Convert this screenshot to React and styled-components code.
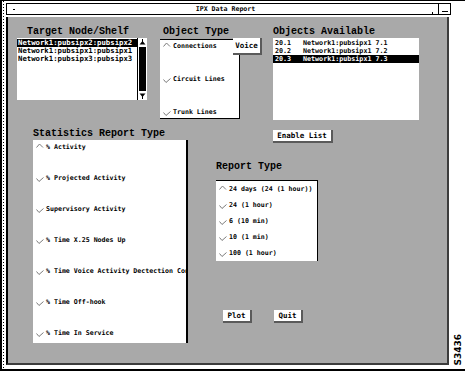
import React from "react";
import styled, { createGlobalStyle } from "styled-components";

const Global = createGlobalStyle`
  html, body { margin: 0; padding: 0; background: #fff; }
  body { font-family: "DejaVu Sans Mono", monospace; color: #000; }
  * { box-sizing: border-box; }
`;

const Frame = styled.div`
  width: 465px;
  height: 371px;
  background: #fff;
  border-top: 1px solid #000;
  border-left: 2px solid #000;
  border-bottom: 2px solid #000;
  display: flex;
`;

const Rail = styled.div`
  width: 4px;
  background: repeating-linear-gradient(to bottom, #000 0 1px, transparent 1px 3px) 1px 0 / 1px 100% no-repeat;
`;

const Center = styled.div`
  width: 443px;
  display: flex;
  flex-direction: column;
  padding-bottom: 4px;
`;

const TitleBar = styled.div`
  margin-top: 2px;
  margin-right: -2px;
  height: 12px;
  border: 1px solid #000;
  background: #fff;
  display: flex;
  align-items: stretch;
`;

const MenuDot = styled.div`
  width: 2px;
  height: 1px;
  background: #000;
  align-self: center;
  margin-left: 6px;
`;

const Title = styled.div`
  flex: 1;
  text-align: center;
  font: bold 6.6px/10px "DejaVu Sans Mono", monospace;
  padding-left: 4px;
`;

const CornerDot = styled.div`
  width: 1px;
  height: 2px;
  background: #000;
  align-self: flex-end;
  margin-right: 5px;
  margin-bottom: 0;
`;

const MinBox = styled.div`
  width: 12px;
  border-left: 1px solid #000;
  display: flex;
  align-items: flex-end;
  justify-content: center;
  padding-bottom: 2px;
`;

const MinBar = styled.div`
  width: 6px;
  height: 1px;
  background: #000;
`;

const Panel = styled.div`
  margin-top: 2px;
  flex: 1;
  background: #a9a9a9;
  border-left: 2px solid #000;
  border-right: 2px solid #3c3c3c;
  border-bottom: 2px solid #3c3c3c;
  padding: 8px 0 0 9px;
  display: flex;
  flex-direction: column;
`;

const Row = styled.div`
  display: flex;
  align-items: flex-start;
  margin-top: ${(p) => p.$top || 0}px;
`;

const Group = styled.div`
  display: flex;
  flex-direction: column;
  align-items: flex-start;
  margin-left: ${(p) => p.$left || 0}px;
`;

const Label = styled.div`
  font: bold 10px/13px "Liberation Mono", "Courier New", monospace;
  height: 13px;
  white-space: nowrap;
  padding-left: ${(p) => p.$indent || 0}px;
  margin-top: ${(p) => p.$top || 0}px;
  margin-bottom: ${(p) => p.$bottom || 0}px;
`;

const ListFrame = styled.div`
  display: flex;
  width: ${(p) => p.$w}px;
  height: ${(p) => p.$h}px;
  background: #fff;
`;

const List = styled.div`
  flex: 1;
  padding-top: 1px;
  overflow: hidden;
`;

const ListRow = styled.div`
  height: 8px;
  display: flex;
  align-items: center;
  white-space: nowrap;
  font: bold ${(p) => p.$size || 7.3}px/8px "DejaVu Sans Mono", monospace;
  padding-left: ${(p) => p.$pad || 1}px;
  background: ${(p) => (p.$selected ? "#000" : "transparent")};
  color: ${(p) => (p.$selected ? "#fff" : "#000")};
`;

const Cell = styled.span`
  display: inline-block;
  width: ${(p) => (p.$w ? `${p.$w}px` : "auto")};
`;

const Scrollbar = styled.div`
  width: 10px;
  border-left: 1px solid #000;
  display: flex;
  flex-direction: column;
  align-items: center;
  padding: 1px 0;
  background: #fff;
`;

const Thumb = styled.div`
  flex: 1;
  width: 7px;
  background: #000;
  margin: 2px 0;
`;

const Arrow = ({ down }) => (
  <svg width="7" height="6" viewBox="0 0 7 6">
    {down ? (
      <>
        <polygon points="0.5,0.5 6.5,0.5 3.5,4" fill="#000" />
        <rect x="3" y="3" width="1" height="3" fill="#000" />
      </>
    ) : (
      <>
        <polygon points="0.5,5.5 6.5,5.5 3.5,2" fill="#000" />
        <rect x="3" y="0" width="1" height="3" fill="#000" />
      </>
    )}
  </svg>
);

const RadioBox = styled.div`
  width: ${(p) => p.$w}px;
  height: ${(p) => p.$h}px;
  background: #fff;
  border-top: ${(p) => (p.$top ? "1px solid #000" : "none")};
  border-right: ${(p) => p.$right || 1}px solid #000;
  border-bottom: ${(p) => (p.$bottom ? "1px solid #000" : "none")};
  display: flex;
  flex-direction: column;
  justify-content: ${(p) => (p.$spread ? "space-between" : "flex-start")};
  gap: ${(p) => p.$gap || 0}px;
  padding: ${(p) => p.$padTop || 2}px 0 ${(p) => p.$padBottom || 2}px 3px;
  overflow: hidden;
`;

const RadioItem = styled.div`
  height: 8px;
  display: flex;
  align-items: center;
  gap: 2px;
  white-space: nowrap;
  font: bold 6.6px/8px "DejaVu Sans Mono", monospace;
  flex-shrink: 0;
`;

const Mark = styled.svg`
  flex-shrink: 0;
  margin-top: ${(p) => (p.$on ? -3 : 2)}px;
`;

const Indicator = ({ on }) => (
  <Mark $on={on} width="8" height="5" viewBox="0 0 8 5">
    <polyline
      points={on ? "0.5,4.5 3.5,1 7,4.5" : "0.5,1.5 3,4.5 7.5,0.5"}
      stroke="#7c7c7c"
      strokeWidth="1"
      fill="none"
    />
  </Mark>
);

const Radio = ({ on, children }) => (
  <RadioItem>
    <Indicator on={on} />
    <span>{children}</span>
  </RadioItem>
);

const Button = styled.div`
  width: ${(p) => p.$w}px;
  height: ${(p) => p.$h || 13}px;
  margin-left: ${(p) => p.$left || 0}px;
  margin-top: ${(p) => p.$top || 0}px;
  background: #fff;
  border-right: 2px solid #5a5a5a;
  border-bottom: 2px solid #5a5a5a;
  display: flex;
  align-items: center;
  justify-content: center;
  font: bold 7.5px/1 "DejaVu Sans Mono", monospace;
  white-space: nowrap;
  position: relative;
  flex-shrink: 0;
`;

const RightMargin = styled.div`
  flex: 1;
  display: flex;
  flex-direction: column;
  justify-content: flex-end;
  align-items: center;
  padding: 0 0 3px 3px;
`;

const Tag = styled.div`
  writing-mode: vertical-rl;
  transform: rotate(180deg);
  font: bold 9px/9px "DejaVu Sans", sans-serif;
`;

const targets = [
  "Network1:pubsipx2:pubsipx2",
  "Network1:pubsipx1:pubsipx1",
  "Network1:pubsipx3:pubsipx3",
];

const objects = [
  ["20.1", "Network1:pubsipx1 7.1"],
  ["20.2", "Network1:pubsipx1 7.2"],
  ["20.3", "Network1:pubsipx1 7.3"],
];

const stats = [
  "% Activity",
  "% Projected Activity",
  "Supervisory Activity",
  "% Time X.25 Nodes Up",
  "% Time Voice Activity Dectection Con",
  "% Time Off-hook",
  "% Time In Service",
];

const reports = [
  "24 days (24 (1 hour))",
  "24 (1 hour)",
  "6 (10 min)",
  "10 (1 min)",
  "100 (1 hour)",
];

export default function App() {
  return (
    <>
      <Global />
      <Frame>
        <Rail />
        <Center>
          <TitleBar>
            <MenuDot />
            <Title>IPX Data Report</Title>
            <CornerDot />
            <MinBox>
              <MinBar />
            </MinBox>
          </TitleBar>
          <Panel>
            <Row>
              <Group>
                <Label $indent={10}>Target Node/Shelf</Label>
                <ListFrame $w={130} $h={62}>
                  <List>
                    {targets.map((t, i) => (
                      <ListRow key={t} $selected={i === 0}>
                        {t}
                      </ListRow>
                    ))}
                  </List>
                  <Scrollbar>
                    <Arrow />
                    <Thumb />
                    <Arrow down />
                  </Scrollbar>
                </ListFrame>
              </Group>
              <Group $left={13}>
                <Label $indent={3} $bottom={1}>Object Type</Label>
                <Row>
                  <RadioBox $w={80} $h={80} $top $bottom $spread>
                    <Radio on>Connections</Radio>
                    <Radio>Circuit Lines</Radio>
                    <Radio>Trunk Lines</Radio>
                  </RadioBox>
                  <Button $w={29} $h={17} $left={-7} $top={-1}>
                    Voice
                  </Button>
                </Row>
              </Group>
              <Group $left={11}>
                <Label>Objects Available</Label>
                <ListFrame $w={146} $h={82}>
                  <List>
                    {objects.map(([a, b], i) => (
                      <ListRow key={a} $selected={i === 2} $size={6.7} $pad={2}>
                        <Cell $w={28}>{a}</Cell>
                        <Cell>{b}</Cell>
                      </ListRow>
                    ))}
                  </List>
                </ListFrame>
              </Group>
            </Row>
            <Row $top={7}>
              <Group $left={16}>
                <Label>Statistics Report Type</Label>
                <RadioBox $w={155} $h={203} $right={2} $gap={23} $padTop={3}>
                  {stats.map((s, i) => (
                    <Radio key={s} on={i === 0}>
                      {s}
                    </Radio>
                  ))}
                </RadioBox>
              </Group>
              <Group $left={28}>
                <Button $w={60} $left={57} $top={3}>
                  Enable List
                </Button>
                <Label $top={17} $bottom={7}>Report Type</Label>
                <RadioBox $w={102} $h={81} $top $gap={8} $padTop={4}>
                  {reports.map((r, i) => (
                    <Radio key={r} on={i === 0}>
                      {r}
                    </Radio>
                  ))}
                </RadioBox>
                <Row $top={49}>
                  <Button $w={29} $left={7}>Plot</Button>
                  <Button $w={29} $left={22}>Quit</Button>
                </Row>
              </Group>
            </Row>
          </Panel>
        </Center>
        <RightMargin>
          <Tag>S3436</Tag>
        </RightMargin>
      </Frame>
    </>
  );
}
